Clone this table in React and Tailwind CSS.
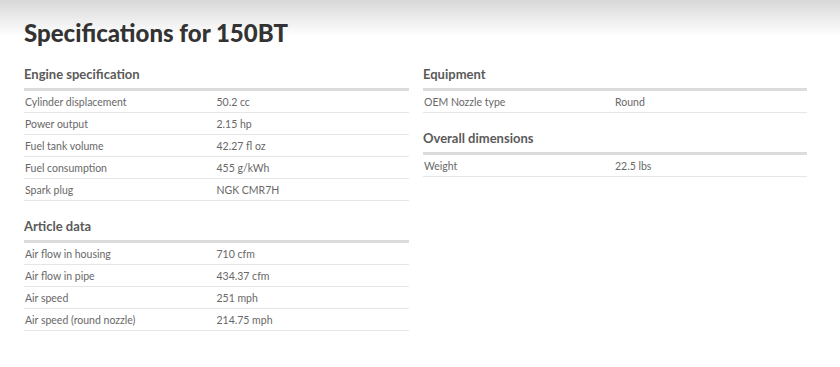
import React from 'react';

const SECTIONS_LEFT = [
  {
    title: 'Engine specification',
    rows: [
      ['Cylinder displacement', '50.2 cc'],
      ['Power output', '2.15 hp'],
      ['Fuel tank volume', '42.27 fl oz'],
      ['Fuel consumption', '455 g/kWh'],
      ['Spark plug', 'NGK CMR7H'],
    ],
  },
  {
    title: 'Article data',
    rows: [
      ['Air flow in housing', '710 cfm'],
      ['Air flow in pipe', '434.37 cfm'],
      ['Air speed', '251 mph'],
      ['Air speed (round nozzle)', '214.75 mph'],
    ],
  },
];

const SECTIONS_RIGHT = [
  {
    title: 'Equipment',
    rows: [['OEM Nozzle type', 'Round']],
  },
  {
    title: 'Overall dimensions',
    rows: [['Weight', '22.5 lbs']],
  },
];

const SpecSection = ({ title, rows }) => (
  <div>
    <h3 className="pt-[16px] mb-[5px] text-[13px] leading-[18px] font-bold text-[#5a5a5a]">{title}</h3>
    <div className="border-t-[3px] border-[#dcdcdc]">
      {rows.map(([label, value], i) => (
        <div key={i} className="flex items-center h-[22px] pt-[2px] border-b border-[#e6e6e6] text-[10.5px] text-[#686868]">
          <span className="w-1/2 pl-px">{label}</span>
          <span className="w-1/2">{value}</span>
        </div>
      ))}
    </div>
  </div>
);

const App = () => {
  return (
    <div
      className="w-[840px] h-[367px] bg-gradient-to-b from-[#d8d8d8] to-white to-[36px] pl-6 pr-[33px]"
      style={{ fontFamily: 'Lato, "Open Sans", sans-serif' }}
    >
      <div className="h-[49px] pt-[18px]">
        <h1 className="text-[24px] leading-[30px] font-black text-[#333]">Specifications for 150BT</h1>
      </div>
      <div className="flex gap-[14px]">
        <div className="w-[385px]">
          {SECTIONS_LEFT.map((s) => <SpecSection key={s.title} {...s} />)}
        </div>
        <div className="w-[384px]">
          {SECTIONS_RIGHT.map((s) => <SpecSection key={s.title} {...s} />)}
        </div>
      </div>
    </div>
  );
};

export default App;
